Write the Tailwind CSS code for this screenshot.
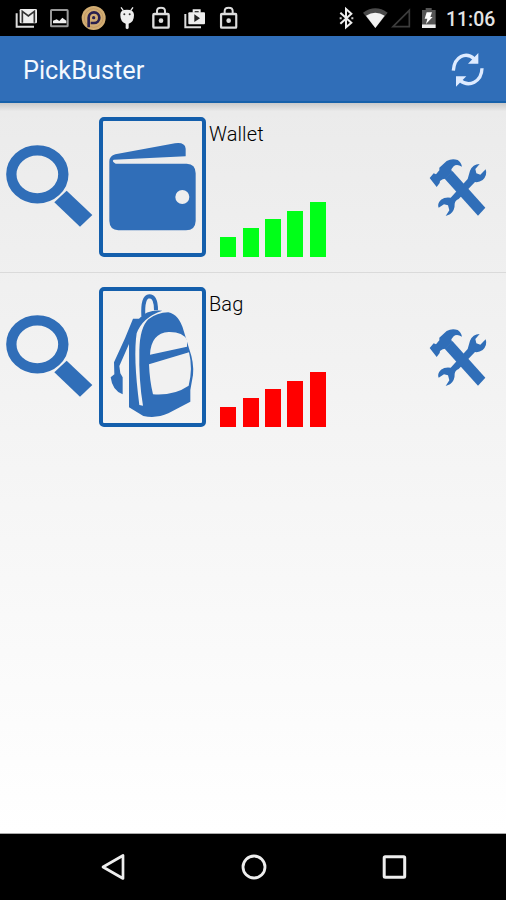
<!DOCTYPE html>
<html lang="en">
<head>
<meta charset="utf-8">
<title>PickBuster</title>
<script src="https://cdn.jsdelivr.net/npm/@tailwindcss/browser@4"></script>
</head>
<body class="w-[506px] h-[900px] overflow-hidden bg-black font-[Roboto,sans-serif] flex flex-col">
<svg class="hidden">
  <symbol id="magnifier" viewBox="0 21 297 420">
    <ellipse cx="112" cy="193" rx="78" ry="72" fill="none" stroke="#306eb8" stroke-width="31"/>
    <path d="M200 242L277 315L240 350L163 277Z" fill="#306eb8"/>
  </symbol>
  <symbol id="tools" viewBox="0 0 258 255">
    <g fill="#306eb8" transform="translate(18 31)">
      <path d="M11 68L23 54L30 57L40 45L40 37L62 17Q78 8 95 14Q105 20 108 34Q92 25 83 33L76 42L78 50L58 70L50 72L42 77L41 83L32 95Z"/>
      <path d="M56 70L79 47L178 157L156 181Z"/>
      <path d="M125 71L132 46Q140 27 161 26L148 41L151 54L163 58L179 42Q185 60 170 74Q159 82 147 80L98 131Q88 134 86 145Q87 165 72 177L59 182L70 165L66 150L54 147L38 157Q33 145 45 133Q57 124 74 127Z"/>
    </g>
  </symbol>
  <symbol id="lock" viewBox="0 0 54 69">
    <path d="M15 21V14Q15 4 27 4T39 14V21" fill="none" stroke="#ddd" stroke-width="6"/>
    <rect x="4" y="23" width="46" height="41" rx="3" fill="none" stroke="#ddd" stroke-width="7"/>
    <circle cx="27" cy="43" r="7" fill="#ddd"/>
  </symbol>
</svg>

<header class="h-9 shrink-0 bg-black flex items-start justify-between">
  <svg class="w-[250px] h-9" viewBox="0 0 750 108">
    <path d="M50 40V80H102" fill="none" stroke="#ddd" stroke-width="6"/>
    <rect x="59" y="27" width="52" height="43" rx="4" fill="#eee"/>
    <path d="M67 68V34L85 48L103 34V68" fill="none" stroke="#333" stroke-width="5"/>
    <rect x="153" y="30" width="50" height="49" rx="2" fill="none" stroke="#999" stroke-width="6"/>
    <path d="M159 70V62L170 58L178 63L187 53L199 62V70Z" fill="#eee"/>
    <circle cx="281" cy="54" r="36" fill="#d2ad73"/>
    <circle cx="281" cy="54" r="28" fill="none" stroke="#b98e5a" stroke-width="2"/>
    <path d="M266 82V53A16 16 0 1 1 282 69H272" fill="none" stroke="#29204e" stroke-width="8"/>
    <circle cx="281" cy="53" r="5" fill="#29204e"/>
    <path d="M363 22L370 32M399 22L392 32" stroke="#eee" stroke-width="4"/>
    <path d="M361 45Q360 29 381 29T402 45Q402 67 386 71V85Q381 90 377 85V71Q361 66 361 45Z" fill="#eee"/>
    <circle cx="373" cy="43" r="3" fill="#333"/><circle cx="389" cy="43" r="3" fill="#333"/>
    <use href="#lock" x="456" y="19" width="54" height="69"/>
    <path d="M556 42V82H603" fill="none" stroke="#ddd" stroke-width="6"/>
    <path d="M581 38V31H599V38" fill="none" stroke="#eee" stroke-width="6"/>
    <rect x="565" y="37" width="50" height="36" rx="3" fill="#eee"/>
    <path d="M583 43L600 55L583 66Z" fill="#222"/>
    <use href="#lock" x="659" y="19" width="54" height="69"/>
  </svg>
  <div class="flex">
    <svg class="w-[110px] h-9" viewBox="240 0 330 108">
      <path d="M253 38L286 68L270 82V27L286 41L253 71" fill="none" stroke="#eee" stroke-width="6"/>
      <path d="M251 55h6M286 55h6" stroke="#ccc" stroke-width="6"/>
      <path d="M321 38Q358 12 395 38L358 84Z" fill="#4a4a4a"/>
      <path d="M330 47Q358 29 386 47L358 84Z" fill="#f2f2f2"/>
      <path d="M411 80L460 31V80Z" fill="none" stroke="#3c3c3c" stroke-width="5"/>
      <path d="M498 30H509V24H527V30H539V73H498Z" fill="#555"/>
      <rect x="498" y="73" width="41" height="11" fill="#eee"/>
      <path d="M512 37H528L523 51H530L510 72L514 56H506Z" fill="#fff"/>
    </svg>
    <div class="w-[60px] pt-[7px] text-[20px] leading-6 font-medium text-[#e4e4e4] whitespace-nowrap"><span class="inline-block origin-left scale-x-[0.97]">11:06</span></div>
  </div>
</header>

<div class="h-[67px] shrink-0 bg-[#306eb8] border-b-2 border-[#1761aa] flex items-center justify-between pl-[23px] pr-[17px] pt-[3px]">
  <h1 class="pt-px text-[25.3px] leading-8 text-[#f4f9ff] whitespace-nowrap">PickBuster</h1>
  <svg class="w-[42px] h-[42px]" viewBox="574 146 126 126">
    <g fill="none" stroke="#deebff" stroke-width="10">
      <path d="M593 211C596 168 631 153 656 176"/>
      <path d="M679 204C678 245 640 262 613 240"/>
    </g>
    <path d="M668 158V190H637ZM601 259V228H632Z" fill="#deebff"/>
  </svg>
</div>

<main class="h-[731px] shrink-0 bg-linear-to-b from-[#ebebeb] via-[#f3f3f3] via-40% to-white border-b border-[#aaa]">
  <div class="h-[14px] bg-linear-to-b from-[#cacaca] to-[#ebebeb] to-60%"></div>
  <section class="h-[156px] flex items-start border-b border-[#dadada]">
    <svg class="w-[99px] h-[140px]"><use href="#magnifier"/></svg>
    <div class="w-[107px] h-[140px] border-4 border-[#145fac] rounded-[5px] flex items-center justify-center">
      <svg class="w-[99px] h-[132px] shrink-0" viewBox="309 33 297 396">
        <path d="M328 154Q329 137 346 133L525 100Q555 96 557 116V139L341 149Q334 153 347 161H560Q587 162 587 190V333Q586 361 558 361H355Q329 360 328 333Z" fill="#306eb8"/>
        <circle cx="547" cy="261" r="21" fill="#eee"/>
      </svg>
    </div>
    <div class="w-[134px] h-[140px] flex flex-col justify-between pl-[3px]">
      <h2 class="pt-[5px] text-[20px] leading-6 font-light text-black tracking-[0.1px]">Wallet</h2>
      <div class="flex items-end gap-[6.4px] pl-[11.2px] *:w-4 *:bg-[#00ff18]">
        <i class="h-5"></i><i class="h-[29px]"></i><i class="h-[38px]"></i><i class="h-[46px]"></i><i class="h-[55px]"></i>
      </div>
    </div>
    <svg class="w-[86px] h-[85px] ml-auto mt-7"><use href="#tools"/></svg>
  </section>
  <section class="flex items-start pt-[14px]">
    <svg class="w-[99px] h-[140px]"><use href="#magnifier"/></svg>
    <div class="w-[107px] h-[140px] border-4 border-[#145fac] rounded-[5px] flex items-center justify-center">
      <svg class="w-[99px] h-[132px] shrink-0" viewBox="-6 3 297 396">
        <path d="M115 78Q112 20 133 19Q153 19 153 61" fill="none" stroke="#306eb8" stroke-width="12"/>
        <path d="M84 86H102Q125 58 172 62Q112 82 95 130Q84 200 103 345L114 347Q101 270 103 180Q105 112 130 88Q155 68 190 67Q222 73 236 122L252 175Q268 220 264 255L256 300V335L190 370Q155 386 115 378L72 352V162L43 228L46 250L53 262V313Q22 302 17 262L28 253L27 217L60 145Z" fill="#306eb8"/>
        <path d="M135 194Q138 129 191 126Q234 125 246 150V170ZM132 223L252 187Q264 235 251 287Q205 318 144 313Q134 273 132 223Z" fill="#f1f1f1"/>
      </svg>
    </div>
    <div class="w-[134px] h-[140px] flex flex-col justify-between pl-[3px]">
      <h2 class="pt-[5px] text-[20px] leading-6 font-light text-black tracking-[0.1px]">Bag</h2>
      <div class="flex items-end gap-[6.4px] pl-[11.2px] *:w-4 *:bg-[#ff0000]">
        <i class="h-5"></i><i class="h-[29px]"></i><i class="h-[38px]"></i><i class="h-[46px]"></i><i class="h-[55px]"></i>
      </div>
    </div>
    <svg class="w-[86px] h-[85px] ml-auto mt-7"><use href="#tools"/></svg>
  </section>
</main>

<nav class="h-[66px] shrink-0 bg-black flex justify-between pl-[99px] pr-[98px] pt-[19px]">
  <svg class="w-7 h-7" viewBox="0 0 28 28" fill="none" stroke="#eee" stroke-width="2.7" stroke-linejoin="round"><path d="M4 14L24 2.5V25.5Z"/></svg>
  <svg class="w-7 h-7" viewBox="0 0 28 28" fill="none" stroke="#eee" stroke-width="2.8"><circle cx="14" cy="14" r="11"/></svg>
  <svg class="w-7 h-7" viewBox="0 0 28 28" fill="none" stroke="#eee" stroke-width="3"><rect x="4.2" y="3.7" width="20.5" height="20.5" rx="1"/></svg>
</nav>
</body>
</html>
